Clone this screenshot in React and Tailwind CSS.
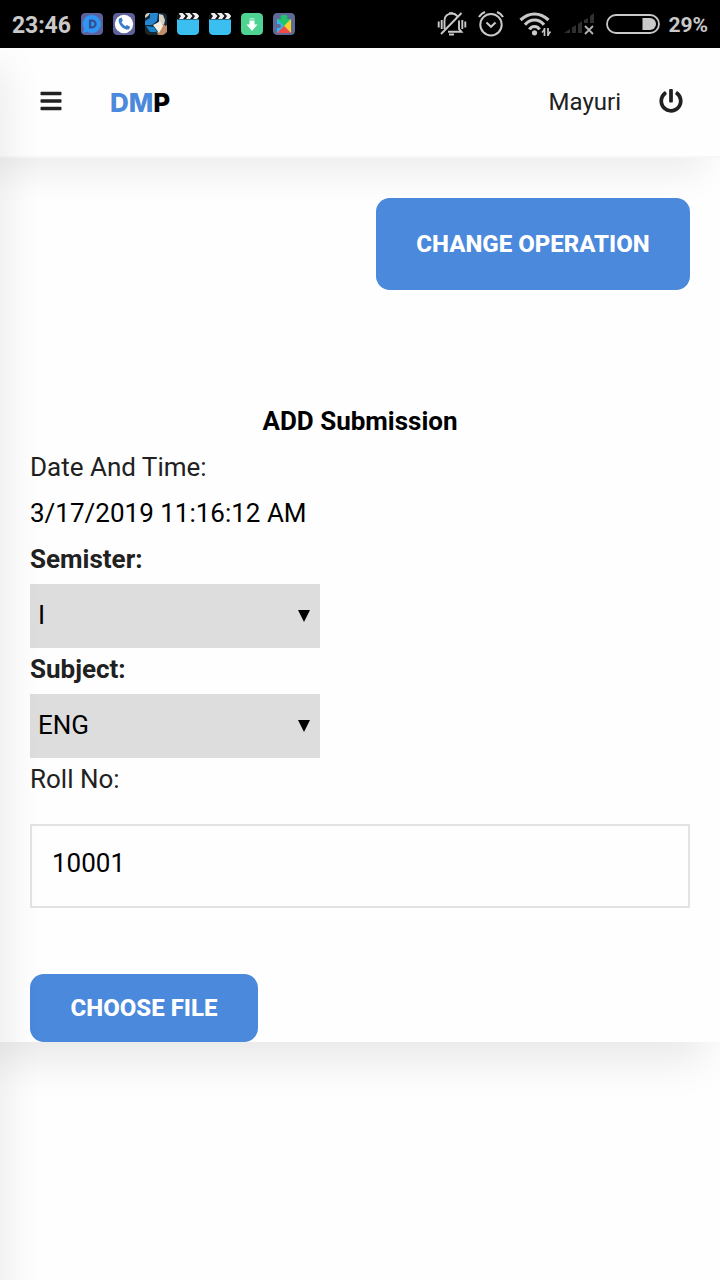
import { FaBars, FaPowerOff } from "react-icons/fa";

function AppBadge({ children }) {
  return (
    <svg viewBox="0 0 22 22" className="h-[22px] w-[22px] rounded">
      {children}
    </svg>
  );
}

function Clapper() {
  return (
    <AppBadge>
      <rect y="1" width="22" height="21" rx="4" fill="#3abff0" />
      <path d="M0 4Q0 0 4 0H22V6.500H0Z" fill="#111" />
      <path d="M1 0h4.500l3 3-2.500 3H2l2-3zM8 0h4.500l3 3-2.500 3H9l2-3zM15 0h4.500l3 3-2.500 3h-4l2-3z" fill="#f0f0f0" />
    </AppBadge>
  );
}

function StatusBar() {
  return (
    <div className="flex h-12 items-center bg-black pl-3 pr-3 text-[#c9c9c9]">
      <span className="w-[69px] text-[23px] font-bold leading-none tracking-[-0.1px] pt-[2px]">23:46</span>
      <div className="flex gap-[10px]">
        <AppBadge>
          <rect width="22" height="22" rx="4" fill="#5d629c" />
          <path d="M11 2a9 9 0 1 1-5 16.600L2 20l1.300-4A9 9 0 0 1 11 2z" fill="#2f96f5" />
          <path d="M9 7.700h2.300a3.300 3.300 0 0 1 0 6.600H9z" fill="none" stroke="#34508c" strokeWidth="2.200" />
        </AppBadge>
        <AppBadge>
          <rect width="22" height="22" rx="4" fill="#5d629c" />
          <circle cx="11" cy="11" r="9.200" fill="#fff" />
          <path d="M6.500 5.200l2-.7 1.400 3.300-1.500 1.300q1.200 2.800 3.900 4.200l1.600-1.200 3.200 1.700-.8 2.200q-1.600 1.200-4.400 0Q7 13.500 5.700 8.700q-.4-2.200.8-3.500z" fill="#397cc8" />
        </AppBadge>
        <AppBadge>
          <rect width="22" height="22" rx="3" fill="#152a43" />
          <path d="M5 0h8l-1 8-5 4H0V8l5-3z" fill="#2685d0" />
          <path d="M0 0h5L3 3 0 5zM14 1l4 1 2 5-1 5-5-3z" fill="#d7d2bd" />
          <path d="M14 11l6 1 1 6-6-2zM12 19l5-4 5-3v7l-4 3h-5z" fill="#c08d67" />
          <path d="M8 12l4-2 3-2 3 4-1 3-3 5-3-4z" fill="#f4eee0" />
          <path d="M1 13l8 1 3 5H5z" fill="#1687cd" />
          <path d="M0 16l6 4 5 2H3l-3-3z" fill="#20251d" />
        </AppBadge>
        <Clapper />
        <Clapper />
        <AppBadge>
          <rect width="22" height="22" rx="4" fill="#4fd392" />
          <path d="M8.500 5h5v1.500h-5z" fill="#a8e9ca" />
          <path d="M8.500 7.500h5v4H16.500l-5.500 6.500-5.500-6.500h3z" fill="#fff" />
        </AppBadge>
        <AppBadge>
          <rect width="22" height="22" rx="4" fill="#5e6b98" />
          <path d="M4 6h14v14H4v-5h2a2 2 0 1 0 0-4H4z" fill="#35b6f2" />
          <path d="M4 6h5a2 2 0 0 1 1-4h2a2 2 0 0 1 1 4h5l-7 7z" fill="#20c66b" />
          <path d="M18 6v14l-7-7z" fill="#fbcf25" />
          <path d="M4 20l7-7 7 7z" fill="#f34848" />
        </AppBadge>
      </div>

      <div className="ml-auto flex items-center">
        <svg viewBox="0 0 30 26" className="mr-[11px] h-[26px] w-[30px]" fill="none" stroke="#c9c9c9" strokeWidth="1.900">
          <path d="M7.500 18V10a7.200 7.200 0 0 1 13-4.500M11 20.800h13.500l-2.500-3V9.500" />
          <path d="M24.500 2L4 23" />
          <path d="M4.700 9v9M1.700 10.500v6M25.300 9v9M28.300 10.500v6" />
          <path d="M12 23.500h5M12 2.200h4" />
        </svg>
        <svg viewBox="0 0 26 26" className="mr-[15px] h-[26px] w-[26px]" fill="none" stroke="#c9c9c9" strokeWidth="2">
          <circle cx="13" cy="13.700" r="10.700" />
          <path d="M8.500 11.500l4.500 4.300 4.500-4.300" />
          <path d="M1 6Q3 2.500 7 1M25 6Q23 2.500 19 1" strokeWidth="2.200" />
        </svg>
        <svg viewBox="0 0 34 26" className="mr-[11px] h-[26px] w-[34px]" fill="none" stroke="#c9c9c9" strokeWidth="3.200">
          <path d="M1.500 9Q8 3 15.500 3T29.500 9M6 13.700Q10 9 15.500 9T25 13.700M10.500 18.500Q12 15.500 15.500 15.500T20.500 18.500" />
          <circle cx="15.500" cy="21.800" r="2.600" fill="#c9c9c9" stroke="none" />
          <path d="M25.500 17v8M29 17v8" strokeWidth="1.700" />
          <path d="M23 21.500L25.500 18.500M31.500 20.500L29 24" strokeWidth="1.500" />
        </svg>
        <svg viewBox="0 0 32 24" className="mr-[10px] h-6 w-8">
          <path d="M0 21l6-4v4zM8 15.500l4-2.500v8H8zM14 12l4-3v12h-4zM20 8l4-2v5h-4zM26 4l4-3v10h-4z" fill="#303030" />
          <path d="M21 14l8 8M29 14l-8 8" stroke="#b5b5b5" strokeWidth="1.800" />
        </svg>
        <svg viewBox="0 0 54 20" className="mr-[8px] h-5 w-[54px]">
          <rect x="1" y="1" width="52" height="18" rx="9" fill="none" stroke="#c9c9c9" strokeWidth="1.800" />
          <path d="M36.500 4H44a6 6 0 0 1 0 12H36.500z" fill="#c9c9c9" />
        </svg>
        <span className="pt-[2px] text-[21px] font-bold leading-none">29%</span>
      </div>
    </div>
  );
}

function Select({ value }) {
  return (
    <button className="flex h-16 w-[290px] items-center justify-between bg-[#ddd] pl-2 pr-[10px] text-black">
      <span className="relative -top-px">{value}</span>
      <svg viewBox="0 0 12 12" className="h-3 w-3">
        <path d="M0 0h12L6 12z" />
      </svg>
    </button>
  );
}

export default function App() {
  return (
    <div className="flex h-[1280px] w-[720px] flex-col overflow-hidden bg-[#fefefe] font-['Roboto',sans-serif]">
      <StatusBar />
      <div className="relative flex-1 overflow-hidden">
        <header className="relative z-10 h-[110px] border-b-2 border-[#f7f7f7] bg-[#fefefe] shadow-[-16px_14px_36px_0_rgba(0,0,0,0.075)]">
          <div className="flex h-[108px] items-center pl-10 pr-[37px] text-[#212121]">
            <FaBars className="-mt-[3px] h-6 w-[22px]" />
            <span className="ml-12 mt-[2px] font-['Inter',sans-serif] text-[26px] font-extrabold leading-none text-[#4b89dc]">
              DM<span className="text-black">P</span>
            </span>
            <span className="ml-auto text-[24px]">Mayuri</span>
            <FaPowerOff className="-mt-[2px] ml-[38px] h-6 w-6" />
          </div>
        </header>
        <main className="flex h-[884px] flex-col items-start bg-[#fefefe] px-[30px] pt-10 text-[26px] leading-[46px] text-[#212121] shadow-[-16px_18px_40px_0_rgba(0,0,0,0.09)]">
          <button className="h-[92px] w-[314px] self-end rounded-[14px] bg-[#4b89dc] text-[24px] font-extrabold text-white">CHANGE OPERATION</button>
          <h1 className="mt-[108px] self-center font-bold text-black">ADD Submission</h1>
          <p>Date And Time:</p>
          <p className="text-black">3/17/2019 11:16:12 AM</p>
          <p className="font-bold">Semister:</p>
          <div className="mt-[2px]"><Select value="I" /></div>
          <p className="-mt-[2px] font-bold">Subject:</p>
          <div className="mt-[2px]"><Select value="ENG" /></div>
          <p className="-mt-[2px]">Roll No:</p>
          <div className="mt-[22px] flex h-[84px] w-full items-center border-2 border-[#e3e3e3] pb-[6px] pl-5 text-black">10001</div>
          <button className="mt-[66px] h-[68px] w-[228px] rounded-[14px] bg-[#4b89dc] text-[24px] font-extrabold text-white">CHOOSE FILE</button>
        </main>
        <aside className="absolute -left-[300px] top-0 z-20 h-[1400px] w-[300px] shadow-[8px_20px_36px_0_rgba(0,0,0,0.075)]" />
      </div>
    </div>
  );
}
